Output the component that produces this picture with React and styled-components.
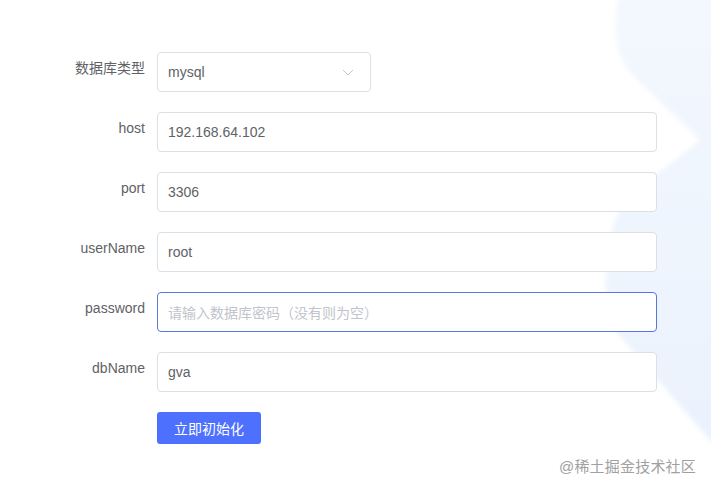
import React from 'react';
import styled, { createGlobalStyle } from 'styled-components';

const GlobalStyle = createGlobalStyle`
  html, body {
    margin: 0;
    padding: 0;
    background: #ffffff;
  }
  body {
    font-family: "Liberation Sans", "Noto Sans CJK SC", sans-serif;
  }
`;

const Page = styled.div`
  position: relative;
  width: 711px;
  height: 492px;
  overflow: hidden;
  background: #ffffff;
`;

const Backdrop = styled.svg`
  position: absolute;
  top: 0;
  right: 0;
  width: 711px;
  height: 492px;
  pointer-events: none;
`;

const Form = styled.form`
  position: relative;
  display: flex;
  flex-direction: column;
  gap: 20px;
  padding: 52px 0 0 37px;
`;

const Row = styled.div`
  display: flex;
  align-items: flex-start;
`;

const Label = styled.label`
  width: 108px;
  padding-right: 12px;
  text-align: right;
  font-size: 14px;
  line-height: 32px;
  color: #606266;
  white-space: nowrap;
`;

const Field = styled.div`
  position: relative;
  box-sizing: border-box;
  width: ${({ $width }) => $width}px;
  height: 40px;
  padding: 0 10px;
  display: flex;
  align-items: center;
  justify-content: space-between;
  border: 1px solid ${({ $focused }) => ($focused ? '#5b76dd' : '#dcdfe6')};
  border-radius: 4px;
  background: #ffffff;
  font-size: 14px;
  color: ${({ $placeholder }) => ($placeholder ? '#c0c4cc' : '#606266')};
`;

const Arrow = styled.svg`
  width: 12px;
  height: 12px;
  margin-right: 6px;
`;

const Button = styled.button`
  margin-left: 120px;
  height: 32px;
  padding: 0 17px;
  border: none;
  border-radius: 3px;
  background: #4d70ff;
  color: #ffffff;
  font-family: inherit;
  font-size: 14px;
`;

const Watermark = styled.div`
  position: absolute;
  right: 15px;
  bottom: 16px;
  font-size: 15px;
  color: #a0a0a0;
  letter-spacing: 0.2px;
`;

const fields = [
  { label: 'host', value: '192.168.64.102' },
  { label: 'port', value: '3306' },
  { label: 'userName', value: 'root' },
  { label: 'password', value: '请输入数据库密码（没有则为空）', placeholder: true, focused: true },
  { label: 'dbName', value: 'gva' },
];

export default function App() {
  return (
    <Page>
      <GlobalStyle />
      <Backdrop viewBox="0 0 711 492">
        <defs>
          <linearGradient id="bg" x1="0" y1="0" x2="0" y2="1">
            <stop offset="0" stopColor="#f4f8fe" />
            <stop offset="1" stopColor="#eaf2fd" />
          </linearGradient>
          <filter id="soft" x="-10%" y="-10%" width="120%" height="120%">
            <feGaussianBlur stdDeviation="2.5" />
          </filter>
        </defs>
        <path
          d="M620 -10 C612 25 614 55 630 72 C650 95 680 120 700 140 C670 165 640 185 623 205 C608 225 605 260 606 320 L720 452 L720 -10 Z"
          fill="url(#bg)"
          filter="url(#soft)"
        />
      </Backdrop>
      <Form>
        <Row>
          <Label>数据库类型</Label>
          <Field $width={214}>
            mysql
            <Arrow viewBox="0 0 12 12">
              <path d="M1 4 L6 9 L11 4" fill="none" stroke="#c0c4cc" strokeWidth="1" />
            </Arrow>
          </Field>
        </Row>
        {fields.map((f) => (
          <Row key={f.label}>
            <Label>{f.label}</Label>
            <Field $width={500} $placeholder={f.placeholder} $focused={f.focused}>
              {f.value}
            </Field>
          </Row>
        ))}
        <Row>
          <Button type="button">立即初始化</Button>
        </Row>
      </Form>
      <Watermark>@稀土掘金技术社区</Watermark>
    </Page>
  );
}
